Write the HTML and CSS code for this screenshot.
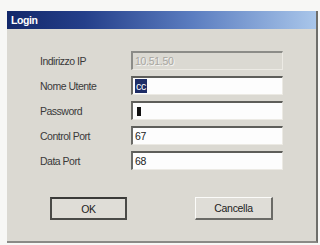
FILE: index.html
```html
<!DOCTYPE html>
<html>
<head>
<meta charset="utf-8">
<link rel="stylesheet" href="styles.css">
</head>
<body>
<div class="window">
  <div class="titlebar"><span class="title">Login</span></div>
  <div class="content">
    <div class="form">
      <label class="lbl">Indirizzo IP</label>
      <div class="field disabled"><span class="dis-text">10.51.50</span></div>
      <label class="lbl">Nome Utente</label>
      <div class="field"><span class="sel">cc</span></div>
      <label class="lbl">Password</label>
      <div class="field"><span class="pw"></span></div>
      <label class="lbl">Control Port</label>
      <div class="field">67</div>
      <label class="lbl">Data Port</label>
      <div class="field">68</div>
    </div>
    <div class="buttons">
      <div class="btn btn-ok">OK</div>
      <div class="btn btn-cancel">Cancella</div>
    </div>
  </div>
</div>
</body>
</html>
```

FILE: styles.css
```css
html, body {
  margin: 0;
  padding: 0;
  background: #f7f7f5;
  width: 320px;
  height: 245px;
  overflow: hidden;
}
body {
  padding-top: 11px;
  padding-left: 7px;
  box-sizing: border-box;
  font-family: "Liberation Sans", Arial, sans-serif;
  font-size: 10.5px;
  color: #2a2a2a;
}
.window {
  width: 311px;
  height: 232px;
  box-sizing: border-box;
  background: #dbd9d2;
  border-right: 2px solid #6e6e6a;
  border-bottom: 2px solid #8a8a86;
  display: flex;
  flex-direction: column;
}
.titlebar {
  height: 18px;
  background: linear-gradient(to right, #13286a 0%, #243f8a 25%, #5b7dc0 60%, #a9c6ea 100%);
  display: flex;
  align-items: center;
  padding-left: 4px;
}
.title {
  color: #ffffff;
  font-weight: bold;
  font-size: 10.5px;
  letter-spacing: -0.4px;
}
.content {
  padding: 22px 0 0 33px;
  display: flex;
  flex-direction: column;
}
.form {
  display: grid;
  grid-template-columns: 91px 152px;
  grid-auto-rows: 19px;
  row-gap: 6px;
  align-items: center;
}
.lbl {
  color: #3a3a3a;
  font-size: 10.5px;
  letter-spacing: -0.5px;
}
.field {
  height: 19px;
  box-sizing: border-box;
  background: #fdfdfd;
  border-top: 2px solid #5e5e5a;
  border-left: 2px solid #6a6a66;
  border-right: 1px solid #eceae4;
  border-bottom: 1px solid #eceae4;
  display: flex;
  align-items: center;
  padding-left: 2px;
  font-size: 10.5px;
  letter-spacing: -0.3px;
  color: #222;
}
.field.disabled {
  background: #dbd9d2;
  border-top-color: #8c8c88;
  border-left-color: #8c8c88;
}
.dis-text {
  color: #a8a6a0;
  text-shadow: 1px 1px 0 #f4f4f2;
}
.sel {
  background: #1e2d66;
  color: #ffffff;
  padding: 1px 1px;
  line-height: 12px;
}
.pw {
  display: inline-block;
  width: 4px;
  height: 9px;
  background: #111;
  margin-left: 2px;
}
.buttons {
  display: flex;
  margin-top: 27px;
  margin-left: 10px;
  gap: 68px;
}
.btn {
  height: 23px;
  box-sizing: border-box;
  display: flex;
  align-items: center;
  justify-content: center;
  font-size: 10.5px;
  letter-spacing: -0.3px;
  color: #222;
  background: #dfddd7;
}
.btn-ok {
  width: 77px;
  border: 2px solid #4a4a47;
  border-top-color: #3a3a38;
}
.btn-cancel {
  width: 78px;
  border-top: 1px solid #fbfbf9;
  border-left: 1px solid #fbfbf9;
  border-right: 2px solid #6a6a66;
  border-bottom: 2px solid #6a6a66;
}
```
